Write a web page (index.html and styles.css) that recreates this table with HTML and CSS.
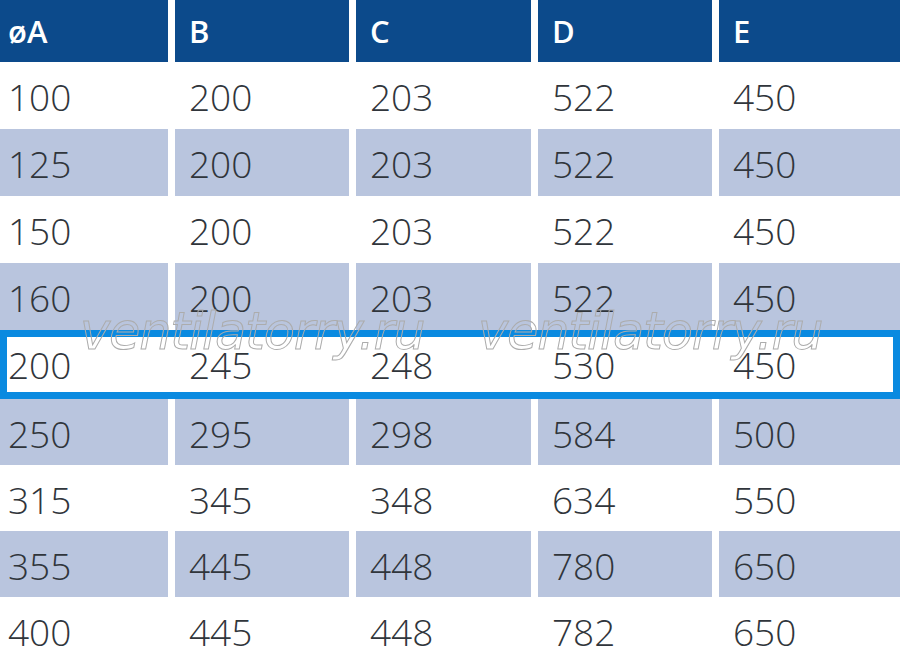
FILE: index.html
```html
<!DOCTYPE html>
<html lang="ru">
<head>
<meta charset="utf-8">
<title>Размеры</title>
<link rel="stylesheet" href="styles.css">
</head>
<body>
<div class="sheet">
  <div class="table">
    <div class="row head">
      <div class="cell">øA</div><div class="cell">B</div><div class="cell">C</div><div class="cell">D</div><div class="cell">E</div>
    </div>
    <div class="row r67"><div class="cell">100</div><div class="cell">200</div><div class="cell">203</div><div class="cell">522</div><div class="cell">450</div></div>
    <div class="row r67 alt"><div class="cell">125</div><div class="cell">200</div><div class="cell">203</div><div class="cell">522</div><div class="cell">450</div></div>
    <div class="row r67"><div class="cell">150</div><div class="cell">200</div><div class="cell">203</div><div class="cell">522</div><div class="cell">450</div></div>
    <div class="row r67 alt"><div class="cell">160</div><div class="cell">200</div><div class="cell">203</div><div class="cell">522</div><div class="cell">450</div></div>
    <div class="row hl"><div class="cell">200</div><div class="cell">245</div><div class="cell">248</div><div class="cell">530</div><div class="cell">450</div></div>
    <div class="row r66 alt"><div class="cell">250</div><div class="cell">295</div><div class="cell">298</div><div class="cell">584</div><div class="cell">500</div></div>
    <div class="row r66"><div class="cell">315</div><div class="cell">345</div><div class="cell">348</div><div class="cell">634</div><div class="cell">550</div></div>
    <div class="row r66 alt"><div class="cell">355</div><div class="cell">445</div><div class="cell">448</div><div class="cell">780</div><div class="cell">650</div></div>
    <div class="row r66"><div class="cell">400</div><div class="cell">445</div><div class="cell">448</div><div class="cell">782</div><div class="cell">650</div></div>
  </div>
  <div class="watermark">
    <span class="mark">ventilatorry.ru</span>
    <span class="mark">ventilatorry.ru</span>
  </div>
</div>
</body>
</html>
```
FILE: styles.css
```css
html, body {
  margin: 0;
  padding: 0;
  background: #ffffff;
}

body {
  width: 900px;
  height: 660px;
  overflow: hidden;
}

.sheet {
  position: relative;
  width: 900px;
  height: 660px;
}

.table {
  display: flex;
  flex-direction: column;
}

.row {
  display: grid;
  grid-template-columns: 168px 174px 175px 174px 181px;
  column-gap: 7px;
  font-family: "Open Sans", "Noto Sans", sans-serif;
}

.cell {
  display: flex;
  align-items: center;
  padding-left: 14px;
  padding-top: 2px;
  box-sizing: border-box;
  font-size: 37px;
  font-weight: 300;
  color: #30353b;
  line-height: 1;
}

.cell:first-child {
  padding-left: 8px;
}

.head {
  height: 62px;
}

.head .cell {
  background: #0c4a8b;
  color: #ffffff;
  font-size: 31px;
  font-weight: 600;
  padding-top: 0;
}

.r67 { height: 67px; }
.r66 { height: 66px; }

.alt .cell {
  background: #b9c5de;
}

.hl {
  height: 69px;
  outline: 7px solid #0a8ae0;
  outline-offset: -7px;
}

.hl .cell {
  padding-top: 0;
}

.watermark {
  position: absolute;
  left: 80px;
  top: 306px;
  display: flex;
  gap: 58px;
  pointer-events: none;
}

.mark {
  display: block;
  font-family: "DejaVu Sans", sans-serif;
  font-style: oblique;
  font-size: 51px;
  line-height: 1;
  letter-spacing: -1.2px;
  color: transparent;
  -webkit-text-stroke: 1px #acacac;
  width: 340px;
  white-space: nowrap;
}
```
